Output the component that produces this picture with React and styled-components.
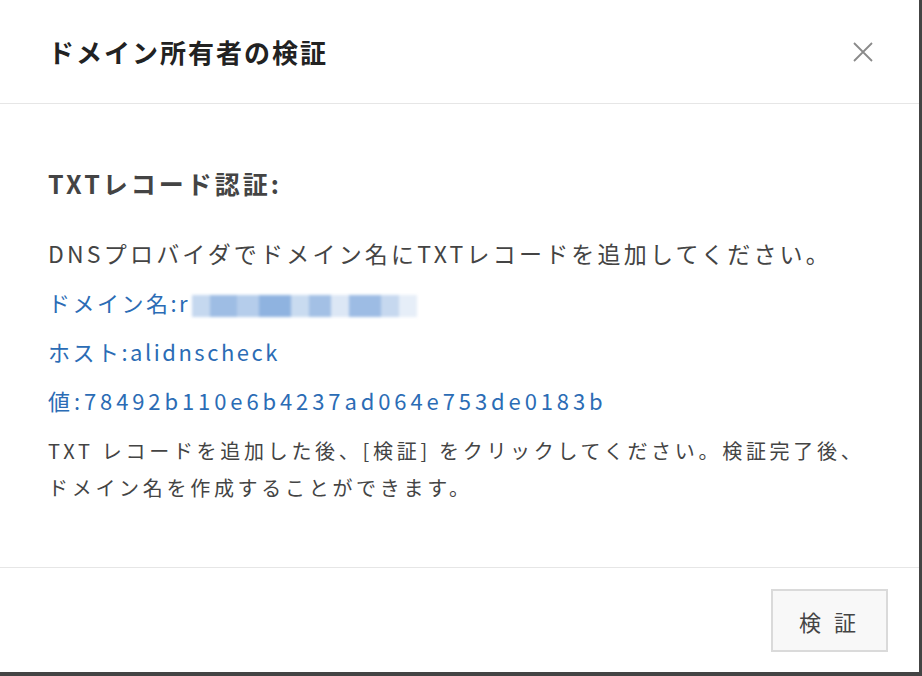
import React from 'react';
import styled, { createGlobalStyle } from 'styled-components';

const GlobalStyle = createGlobalStyle`
    html, body {
        margin: 0;
        padding: 0;
        background: #444;
    }
    body {
        font-family: "Noto Sans CJK JP", "Noto Sans", sans-serif;
    }
`;

const Dialog = styled.div`
    width: 919px;
    height: 672px;
    background: #fff;
    display: flex;
    flex-direction: column;
    color: #333;
`;

const Header = styled.header`
    height: 104px;
    flex-shrink: 0;
    border-bottom: 1px solid #e6e6e6;
    display: flex;
    align-items: center;
    justify-content: space-between;
    padding: 0 44px 0 48px;
    box-sizing: border-box;
`;

const Title = styled.h2`
    margin: 0;
    font-size: 26px;
    font-weight: 700;
    letter-spacing: 2px;
    color: #222;
`;

const Close = styled.button`
    border: 0;
    background: none;
    padding: 0;
    width: 24px;
    height: 24px;
    cursor: pointer;
    display: flex;
    align-items: center;
    justify-content: center;
`;

const Body = styled.section`
    flex: 1;
    padding: 63px 40px 0 48px;
`;

const Heading = styled.h3`
    margin: 0 0 30px;
    font-size: 25px;
    font-weight: 700;
    letter-spacing: 3px;
    color: #444;
    line-height: 32px;
`;

const Line = styled.p`
    margin: 0;
    font-size: ${p => p.$size || '22px'};
    letter-spacing: ${p => p.$spacing || '2.5px'};
    line-height: 49px;
    color: ${p => (p.$link ? '#2b6cb5' : '#444')};
`;

const Note = styled.p`
    margin: 7px 0 0;
    font-size: 20px;
    letter-spacing: 3.7px;
    line-height: 37px;
    color: #444;
    white-space: nowrap;
`;

const Blurred = styled.span`
    display: inline-block;
    vertical-align: middle;
    width: 225px;
    height: 22px;
    margin-left: 2px;
    background: linear-gradient(
        90deg,
        #c5d8ef 0 8%,
        #9ebde4 8% 20%,
        #b5cdeb 20% 30%,
        #8fb3e0 30% 44%,
        #c9dbf0 44% 52%,
        #a3c0e5 52% 62%,
        #dce7f5 62% 70%,
        #9dbce4 70% 84%,
        #c6d8ef 84% 92%,
        #e6eef8 92% 100%
    );
    filter: blur(1.5px);
`;

const Footer = styled.footer`
    height: 105px;
    flex-shrink: 0;
    border-top: 1px solid #e6e6e6;
    display: flex;
    justify-content: flex-end;
    align-items: flex-start;
    padding: 21px 31px 0 0;
    box-sizing: border-box;
`;

const Button = styled.button`
    width: 117px;
    height: 63px;
    background: #f8f8f8;
    border: 2px solid #dadada;
    font-family: "Noto Sans CJK JP", "Noto Sans", sans-serif;
    font-size: 22px;
    letter-spacing: 4px;
    color: #444;
    cursor: pointer;
`;

export default function App() {
    return (
        <>
            <GlobalStyle />
            <Dialog>
                <Header>
                    <Title>ドメイン所有者の検証</Title>
                    <Close aria-label="close">
                        <svg width="22" height="22" viewBox="0 0 22 22">
                            <path d="M2 2 L20 20 M20 2 L2 20" stroke="#8a8a8a" strokeWidth="1.8" fill="none" />
                        </svg>
                    </Close>
                </Header>
                <Body>
                    <Heading>TXTレコード認証:</Heading>
                    <Line $size="23px" $spacing="3.2px">DNSプロバイダでドメイン名にTXTレコードを追加してください。</Line>
                    <Line $link>ドメイン名:r<Blurred /></Line>
                    <Line $link>ホスト:alidnscheck</Line>
                    <Line $link $spacing="3.9px">値:78492b110e6b4237ad064e753de0183b</Line>
                    <Note>
                        TXT レコードを追加した後、[検証] をクリックしてください。検証完了後、
                        <br />
                        ドメイン名を作成することができます。
                    </Note>
                </Body>
                <Footer>
                    <Button>検 証</Button>
                </Footer>
            </Dialog>
        </>
    );
}
